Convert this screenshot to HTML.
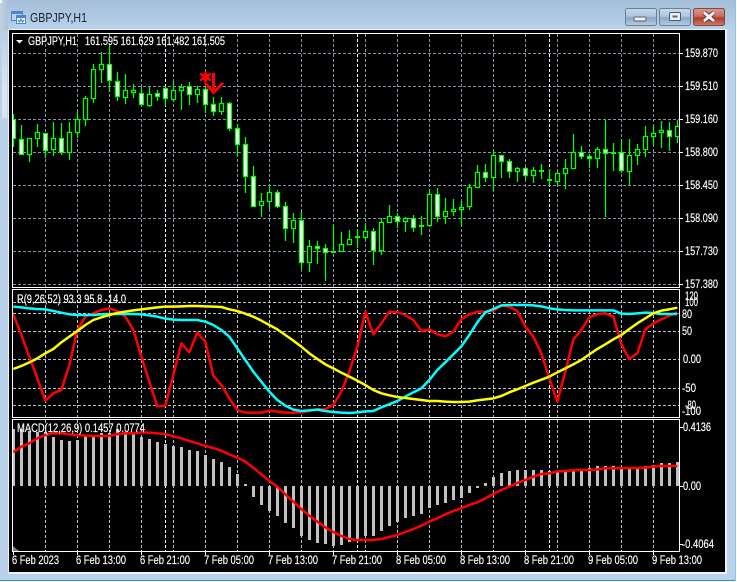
<!DOCTYPE html>
<html><head><meta charset="utf-8"><title>GBPJPY,H1</title>
<style>
html,body{margin:0;padding:0;background:#fff;width:737px;height:582px;overflow:hidden}
svg{display:block}
text{font-family:"Liberation Sans",sans-serif;font-size:11.5px;fill:#fff;stroke:#fff;stroke-width:.15px}
</style></head><body>
<svg width="737" height="582" viewBox="0 0 737 582" xmlns="http://www.w3.org/2000/svg">
<defs>
<linearGradient id="tb" x1="0" y1="0" x2="0" y2="1"><stop offset="0" stop-color="#a4bed8"/><stop offset="1" stop-color="#b8d2eb"/></linearGradient>
<linearGradient id="tl" x1="0" y1="0" x2="1" y2="0"><stop offset="0" stop-color="#c4d2e0"/><stop offset="1" stop-color="#a9c3dd"/></linearGradient>
<linearGradient id="side" x1="0" y1="0" x2="0" y2="1"><stop offset="0" stop-color="#b9cee2"/><stop offset=".7" stop-color="#dde7f0"/><stop offset="1" stop-color="#d8e3ee"/></linearGradient>
<linearGradient id="btn" x1="0" y1="0" x2="0" y2="1"><stop offset="0" stop-color="#c8d9ea"/><stop offset=".45" stop-color="#afc6dd"/><stop offset=".55" stop-color="#8aa8c6"/><stop offset="1" stop-color="#b4cde4"/></linearGradient>
<linearGradient id="cls" x1="0" y1="0" x2="0" y2="1"><stop offset="0" stop-color="#dc9a8c"/><stop offset=".45" stop-color="#cb6f60"/><stop offset=".55" stop-color="#b23b2b"/><stop offset="1" stop-color="#cf7a63"/></linearGradient>
<clipPath id="c1"><rect x="13" y="34" width="666" height="253"/></clipPath>
<clipPath id="c2"><rect x="13" y="290" width="666" height="127"/></clipPath>
<clipPath id="c3"><rect x="13" y="420" width="666" height="131"/></clipPath>
</defs>
<!-- window frame -->
<path d="M2 2Q2 0 4 0H733Q735 0 735 2V580H0V30Z" fill="#b9d1ea"/>
<rect x="0" y="0" width="735" height="30" fill="url(#tb)"/>
<rect x="0" y="0" width="8" height="30" fill="url(#tl)"/>
<rect x="0" y="0" width="2" height="3" fill="#fff"/>
<rect x="2" y="30" width="5" height="88" fill="url(#side)"/>
<rect x="0" y="580" width="736" height="1" fill="#2d9aa6"/>
<rect x="735" y="0" width="1" height="581" fill="#8fc4dc"/>
<!-- inner client edges -->
<rect x="8" y="29" width="719" height="545" fill="#eef3f8"/>
<rect x="9" y="30" width="716" height="542" fill="#000"/>
<!-- title -->
<g shape-rendering="crispEdges">
<rect x="11.5" y="11.5" width="11" height="9" fill="#b8d4f0" stroke="#4c86c8"/>
<rect x="16.5" y="15.5" width="9" height="8" fill="#eef6ff" stroke="#4c86c8"/>
<rect x="12" y="12" width="10" height="2" fill="#4c86c8"/>
<rect x="17" y="16" width="8" height="2" fill="#4c86c8"/>
</g>
<path d="M18 20l1.500 2 1.500-3 1.500 3 1.500-2" fill="none" stroke="#3a74b8" stroke-width="1"/>
<text x="30" y="22" style="font-size:13px;fill:#17202c;stroke:none" textLength="57" lengthAdjust="spacingAndGlyphs">GBPJPY,H1</text>
<!-- buttons -->
<rect x="625.500" y="8.500" width="31" height="17" rx="2" fill="url(#btn)" stroke="#6d7f96"/>
<rect x="634" y="17" width="12" height="4" rx="1" fill="#eef2f6" stroke="#4f5c6e" stroke-width="1"/>
<rect x="659.500" y="8.500" width="31" height="17" rx="2" fill="url(#btn)" stroke="#6d7f96"/>
<rect x="669.500" y="12.500" width="11" height="8" rx="1" fill="#e8eef4" stroke="#4f5c6e"/>
<rect x="672.500" y="15.500" width="5" height="2" fill="#5a6778"/>
<rect x="693.500" y="8.500" width="31" height="17" rx="2" fill="url(#cls)" stroke="#7a4a50"/>
<path d="M704 12.500L714 21M714 12.500L704 21" stroke="#4c3a40" stroke-width="4.500" fill="none"/>
<path d="M704 12.500L714 21M714 12.500L704 21" stroke="#f4f4f4" stroke-width="2.800" fill="none"/>

<!-- frames -->
<g fill="none" stroke="#fff" shape-rendering="crispEdges">
<path d="M12.500 33.500H679.500V287.500H12.500Z"/>
<path d="M12.500 289.500H679.500V417.500H12.500Z"/>
<path d="M12.500 419.500H679.500V551.500H12.500Z"/>
<path d="M680 53.500h3M680 86.500h3M680 119.500h3M680 152.500h3M680 185.500h3M680 218.500h3M680 251.500h3M680 284.500h3"/>
<path d="M680 427.500h3M680 486.500h3M680 544.500h3"/>
<path d="M13.500 552v3M77.500 552v3M141.500 552v3M205.500 552v3M269.500 552v3M333.500 552v3M397.500 552v3M461.500 552v3M525.500 552v3M589.500 552v3M653.500 552v3"/>
</g>

<!-- grid main -->
<g fill="none" shape-rendering="crispEdges" stroke-dasharray="3 2">
<g clip-path="url(#c1)" stroke="#8394a6">
<path d="M13 53.500H679M13 86.500H679M13 119.500H679M13 152.500H679M13 185.500H679M13 218.500H679M13 251.500H679M13 284.500H679"/>
<path d="M45.500 34V287M77.500 34V287M109.500 34V287M141.500 34V287M173.500 34V287M205.500 34V287M237.500 34V287M269.500 34V287M301.500 34V287M333.500 34V287M365.500 34V287M397.500 34V287M429.500 34V287M461.500 34V287M493.500 34V287M525.500 34V287M557.500 34V287M589.500 34V287M621.500 34V287M653.500 34V287"/>
<path stroke="#fff" d="M165.500 34V287M357.500 34V287M549.500 34V287"/>
</g>
<g clip-path="url(#c2)" stroke="#b8c0c8">
<path d="M13 302.500H679M13 313.500H679M13 331.500H679M13 359.500H679M13 388.500H679M13 405.500H679"/>
<path d="M45.500 290V417M77.500 290V417M109.500 290V417M141.500 290V417M173.500 290V417M205.500 290V417M237.500 290V417M269.500 290V417M301.500 290V417M333.500 290V417M365.500 290V417M397.500 290V417M429.500 290V417M461.500 290V417M493.500 290V417M525.500 290V417M557.500 290V417M589.500 290V417M621.500 290V417M653.500 290V417"/>
<path stroke="#fff" d="M165.500 290V417M357.500 290V417M549.500 290V417"/>
</g>
<g clip-path="url(#c3)" stroke="#b8c0c8">
<path d="M45.500 420V551M77.500 420V551M109.500 420V551M141.500 420V551M173.500 420V551M205.500 420V551M237.500 420V551M269.500 420V551M301.500 420V551M333.500 420V551M365.500 420V551M397.500 420V551M429.500 420V551M461.500 420V551M493.500 420V551M525.500 420V551M557.500 420V551M589.500 420V551M621.500 420V551M653.500 420V551"/>
<path stroke="#fff" d="M165.500 420V551M357.500 420V551M549.500 420V551"/>
</g>
</g>

<!-- candles -->
<g clip-path="url(#c1)" stroke="#00ff00" stroke-width="1.25">
<path fill="none" d="M13.500 114V147M21.500 125V155M29.500 138V162M37.500 124V147M45.500 133V158M53.500 122V156M61.500 123V155M69.500 122V160M77.500 111V138M85.500 96V126M93.500 64V103M101.500 52V83M109.500 45V92M117.500 72V101M125.500 74V104M133.500 84V98M141.500 87V106M149.500 86V107M157.500 90V101M165.500 86V106M173.500 81V102M181.500 84V110M189.500 82V105M197.500 86V103M205.500 87V113M213.500 97V116M221.500 97V115M229.500 102V131M237.500 124V156M245.500 137V193M253.500 166V207M261.500 193V217M269.500 185V209M277.500 190V208M285.500 202V241M293.500 213V243M301.500 212V269M309.500 240V272M317.500 241V264M325.500 244V281M333.500 225V252M341.500 232V252M349.500 230V245M357.500 229V248M365.500 223V240M373.500 228V265M381.500 218V255M389.500 205V222M397.500 213V228M405.500 217V232M413.500 215V232M421.500 216V235M429.500 189V227M437.500 188V222M445.500 198V224M453.500 199V216M461.500 201V227M469.500 184V210M477.500 165V188M485.500 164V182M493.500 150V191M501.500 155V178M509.500 159V178M517.500 167V182M525.500 167V180M533.500 167V183M541.500 164V179M549.500 169V186M557.500 171V185M565.500 159V189M573.500 134V169M581.500 146V159M589.500 154V168M597.500 147V168M605.500 119V217M613.500 143V171M621.500 139V173M629.500 139V185M637.500 144V165M645.500 126V157M653.500 125V145M661.500 121V148M669.500 122V151M677.500 120V143"/>
<path fill="#fff" d="M11.500 119.500h4v19h-4zM19.500 139.500h4v15h-4zM43.500 133.500h4v17h-4zM59.500 138.500h4v14h-4zM107.500 64.500h4v16h-4zM115.500 81.500h4v15h-4zM139.500 93.500h4v11h-4zM155.500 93.500h4v3h-4zM163.500 88.500h4v10h-4zM187.500 86.500h4v8h-4zM203.500 89.500h4v15h-4zM211.500 104.500h4v7h-4zM227.500 103.500h4v25h-4zM235.500 128.500h4v16h-4zM243.500 144.500h4v32h-4zM251.500 176.500h4v30h-4zM275.500 192.500h4v14h-4zM283.500 206.500h4v22h-4zM299.500 220.500h4v42h-4zM315.500 246.500h4v2h-4zM323.500 248.500h4v4h-4zM371.500 231.500h4v19h-4zM395.500 216.500h4v5h-4zM411.500 218.500h4v9h-4zM435.500 194.500h4v22h-4zM483.500 172.500h4v5h-4zM499.500 155.500h4v6h-4zM507.500 161.500h4v10h-4zM523.500 168.500h4v7h-4zM579.500 152.500h4v4h-4zM587.500 156.500h4v2h-4zM603.500 149.500h4v4h-4zM619.500 152.500h4v18h-4zM667.500 130.500h4v6h-4z"/>
<path fill="#000" d="M27.500 138.500h4v16h-4zM35.500 132.500h4v6h-4zM51.500 138.500h4v11h-4zM67.500 132.500h4v20h-4zM75.500 119.500h4v13h-4zM83.500 98.500h4v21h-4zM91.500 69.500h4v29h-4zM99.500 64.500h4v5h-4zM123.500 90.500h4v7h-4zM131.500 90.500h4v2h-4zM147.500 94.500h4v11h-4zM171.500 90.500h4v9h-4zM179.500 87.500h4v3h-4zM195.500 89.500h4v5h-4zM219.500 103.500h4v8h-4zM259.500 201.500h4v4h-4zM267.500 192.500h4v9h-4zM291.500 220.500h4v8h-4zM307.500 246.500h4v16h-4zM339.500 244.500h4v7h-4zM347.500 239.500h4v5h-4zM363.500 231.500h4v6h-4zM379.500 222.500h4v28h-4zM387.500 216.500h4v6h-4zM403.500 218.500h4v3h-4zM427.500 194.500h4v31h-4zM443.500 211.500h4v5h-4zM451.500 209.500h4v2h-4zM459.500 207.500h4v2h-4zM467.500 187.500h4v19h-4zM475.500 172.500h4v15h-4zM491.500 155.500h4v22h-4zM515.500 168.500h4v3h-4zM531.500 170.500h4v5h-4zM555.500 173.500h4v8h-4zM563.500 168.500h4v5h-4zM571.500 152.500h4v16h-4zM595.500 149.500h4v9h-4zM627.500 155.500h4v16h-4zM635.500 149.500h4v6h-4zM643.500 136.500h4v13h-4zM651.500 133.500h4v3h-4zM659.500 130.500h4v2h-4zM675.500 126.500h4v10h-4z"/>
<path fill="#00ff00" stroke="none" d="M331 251h5v2h-5zM355 236h5v2h-5zM419 225h5v2h-5zM539 170h5v2h-5zM547 179h5v2h-5zM611 152h5v2h-5z"/>
</g>

<!-- signal marks -->
<g fill="none" stroke="#ff0000">
<path stroke-width="3" d="M213.500 73V92"/>
<path stroke-width="3" d="M205 83L213.500 92.500L223 83"/>
<path stroke-width="2.400" d="M205.500 71.500V82.500M200 73.500L211 80.500M211 73.500L200 80.500"/>
</g>
<circle cx="205.500" cy="77" r="3.500" fill="#ff0000"/>

<!-- indicator lines 1 -->
<g clip-path="url(#c2)"><g transform="translate(0 285) scale(.33333)" fill="none" stroke-width="7.500" stroke-linejoin="round">
<polyline stroke="#ff0000" points="40,88 64,150 88,215 112,280 136,347 160,325 184,315 208,240 232,135 256,95 280,85 304,75 328,70 352,78 376,95 400,135 424,215 448,290 472,364 496,362 520,270 544,175 568,202 592,143 616,170 640,272 664,300 688,340 712,375 736,383 760,383 784,383 808,377 832,380 856,383 880,383 904,382 928,378 952,373 976,372 1000,360 1024,320 1048,260 1072,185 1096,80 1120,148 1144,115 1168,80 1192,82 1216,90 1240,105 1264,138 1288,133 1312,148 1336,154 1360,140 1384,103 1408,88 1432,80 1456,80 1480,77 1504,62 1528,65 1552,78 1576,125 1600,155 1624,205 1648,280 1672,350 1696,260 1720,163 1744,135 1768,97 1792,87 1816,85 1840,95 1864,178 1888,222 1912,205 1936,133 1960,115 1984,103 2008,92 2032,82"/>
<polyline stroke="#00ffff" points="40,65 64,67 88,70 112,72 136,73 160,78 184,83 208,88 232,90 256,90 280,90 304,88 328,87 352,87 376,87 400,87 424,88 448,91 472,95 496,101 520,104 544,105 568,105 592,105 616,110 640,120 664,135 688,155 712,190 736,225 760,260 784,290 808,320 832,345 856,362 880,374 904,378 928,376 952,374 976,378 1000,381 1024,383 1048,384 1072,382 1096,379 1120,378 1144,367 1168,358 1192,348 1216,335 1240,322 1264,310 1288,285 1312,255 1336,232 1360,208 1384,184 1408,150 1432,112 1456,82 1480,72 1504,61 1528,60 1552,60 1576,60 1600,61 1624,64 1648,70 1672,73 1696,75 1720,76 1744,76 1768,76 1792,76 1816,76 1840,76 1864,86 1888,87 1912,85 1936,83 1960,84 1984,87 2008,87 2032,87"/>
<polyline stroke="#ffff00" points="40,252 64,243 88,232 112,220 136,205 160,192 184,172 208,155 232,138 256,120 280,105 304,97 328,90 352,84 376,80 400,76 424,73 448,70 472,67 496,65 520,65 544,64 568,63 592,63 616,64 640,65 664,66 688,73 712,78 736,86 760,95 784,107 808,120 832,133 856,150 880,167 904,185 928,205 952,222 976,238 1000,250 1024,263 1048,275 1072,287 1096,300 1120,315 1144,325 1168,331 1192,336 1216,339 1240,342 1264,345 1288,348 1312,348 1336,350 1360,351 1384,351 1408,350 1432,346 1456,343 1480,340 1504,333 1528,322 1552,313 1576,303 1600,293 1624,284 1648,275 1672,262 1696,250 1720,238 1744,225 1768,208 1792,192 1816,178 1840,163 1864,150 1888,132 1912,115 1936,100 1960,85 1984,77 2008,73 2032,68"/>
</g></g>

<!-- histogram -->
<g clip-path="url(#c3)">
<path fill="none" stroke="#c0c0c0" stroke-width="3" shape-rendering="crispEdges" d="M13.500 486V429M21.500 486V429M29.500 486V431M37.500 486V432M45.500 486V432M53.500 486V437M61.500 486V440M69.500 486V441M77.500 486V440M85.500 486V435M93.500 486V435M101.500 486V433M109.500 486V433M117.500 486V429M125.500 486V432M133.500 486V434M141.500 486V437M149.500 486V439M157.500 486V442M165.500 486V444M173.500 486V446M181.500 486V447M189.500 486V450M197.500 486V451M205.500 486V455M213.500 486V459M221.500 486V462M229.500 486V467M237.500 486V474M245.500 486V484M253.500 486V497M261.500 486V505M269.500 486V511M277.500 486V516M285.500 486V523M293.500 486V528M301.500 486V536M309.500 486V540M317.500 486V543M325.500 486V544M333.500 486V546M341.500 486V545M349.500 486V542M357.500 486V539M365.500 486V536M373.500 486V536M381.500 486V531M389.500 486V526M397.500 486V522M405.500 486V518M413.500 486V516M421.500 486V514M429.500 486V508M437.500 486V505M445.500 486V503M453.500 486V500M461.500 486V498M469.500 486V493M477.500 486V488M485.500 486V483M493.500 486V477M501.500 486V473M509.500 486V471M517.500 486V470M525.500 486V470M533.500 486V470M541.500 486V470M549.500 486V471M557.500 486V471M565.500 486V471M573.500 486V470M581.500 486V470M589.500 486V468M597.500 486V466M605.500 486V466M613.500 486V466M621.500 486V467M629.500 486V467M637.500 486V468M645.500 486V466M653.500 486V465M661.500 486V463M669.500 486V463M677.500 486V462"/>
<g transform="translate(0 285) scale(.33333)" fill="none" stroke-width="7.500" stroke-linejoin="round">
<polyline stroke="#ff0000" points="40,502 64,485 88,475 112,460 136,450 160,445 184,445 208,448 232,450 256,452 280,453 304,453 328,453 352,447 376,445 400,445 424,442 448,443 472,445 496,447 520,454 544,460 568,468 592,475 616,483 640,489 664,497 688,508 712,518 736,530 760,548 784,568 808,588 832,605 856,628 880,650 904,672 928,692 952,710 976,727 1000,741 1024,753 1048,762 1072,765 1096,765 1120,765 1144,762 1168,756 1192,750 1216,741 1240,732 1264,722 1288,710 1312,700 1336,688 1360,678 1384,670 1408,660 1432,652 1456,640 1480,627 1504,615 1528,605 1552,594 1576,585 1600,575 1624,567 1648,565 1672,559 1696,558 1720,556 1744,555 1768,555 1792,553 1816,550 1840,550 1864,549 1888,549 1912,549 1936,548 1960,545 1984,543 2008,543 2032,543"/>
</g>
</g>
<path d="M13 546L19 551H13Z" fill="#708090"/>

<!-- chart labels -->
<path d="M16 40h7l-3.500 3.500z" fill="#fff"/>
<text x="28" y="45" textLength="49" lengthAdjust="spacingAndGlyphs">GBPJPY,H1</text>
<text x="85" y="45" textLength="140" lengthAdjust="spacingAndGlyphs">161.595 161.629 161.482 161.505</text>
<text x="17" y="303" textLength="109" lengthAdjust="spacingAndGlyphs">R(9,26,52) 93.3 95.8 -14.0</text>
<text x="17" y="432" textLength="128" lengthAdjust="spacingAndGlyphs">MACD(12,26,9) 0.1457 0.0774</text>

<!-- price axis -->
<g>
<text x="685" y="57" textLength="33" lengthAdjust="spacingAndGlyphs">159.870</text>
<text x="685" y="90" textLength="33" lengthAdjust="spacingAndGlyphs">159.510</text>
<text x="685" y="123" textLength="33" lengthAdjust="spacingAndGlyphs">159.160</text>
<text x="685" y="156" textLength="33" lengthAdjust="spacingAndGlyphs">158.800</text>
<text x="685" y="189" textLength="33" lengthAdjust="spacingAndGlyphs">158.450</text>
<text x="685" y="222" textLength="33" lengthAdjust="spacingAndGlyphs">158.090</text>
<text x="685" y="255" textLength="33" lengthAdjust="spacingAndGlyphs">157.730</text>
<text x="685" y="288" textLength="33" lengthAdjust="spacingAndGlyphs">157.380</text>
<text x="685" y="300" textLength="13" lengthAdjust="spacingAndGlyphs">120</text>
<text x="685" y="306" textLength="13" lengthAdjust="spacingAndGlyphs">100</text>
<text x="682" y="318" textLength="10" lengthAdjust="spacingAndGlyphs">80</text>
<text x="682" y="335" textLength="10" lengthAdjust="spacingAndGlyphs">50</text>
<text x="683" y="363" textLength="18" lengthAdjust="spacingAndGlyphs">0.00</text>
<text x="682" y="392" textLength="14" lengthAdjust="spacingAndGlyphs">-50</text>
<text x="685" y="409" textLength="11" lengthAdjust="spacingAndGlyphs">-80</text>
<text x="682" y="415" textLength="19" lengthAdjust="spacingAndGlyphs">-100</text>
<text x="683" y="431" textLength="28" lengthAdjust="spacingAndGlyphs">0.4136</text>
<text x="683" y="490" textLength="18" lengthAdjust="spacingAndGlyphs">0.00</text>
<text x="682" y="548" textLength="32" lengthAdjust="spacingAndGlyphs">-0.4064</text>
</g>

<!-- time axis -->
<g>
<text x="12" y="564" textLength="47" lengthAdjust="spacingAndGlyphs">6 Feb 2023</text>
<text x="76" y="564" textLength="50" lengthAdjust="spacingAndGlyphs">6 Feb 13:00</text>
<text x="140" y="564" textLength="50" lengthAdjust="spacingAndGlyphs">6 Feb 21:00</text>
<text x="204" y="564" textLength="50" lengthAdjust="spacingAndGlyphs">7 Feb 05:00</text>
<text x="268" y="564" textLength="50" lengthAdjust="spacingAndGlyphs">7 Feb 13:00</text>
<text x="332" y="564" textLength="50" lengthAdjust="spacingAndGlyphs">7 Feb 21:00</text>
<text x="396" y="564" textLength="50" lengthAdjust="spacingAndGlyphs">8 Feb 05:00</text>
<text x="460" y="564" textLength="50" lengthAdjust="spacingAndGlyphs">8 Feb 13:00</text>
<text x="524" y="564" textLength="50" lengthAdjust="spacingAndGlyphs">8 Feb 21:00</text>
<text x="588" y="564" textLength="50" lengthAdjust="spacingAndGlyphs">9 Feb 05:00</text>
<text x="652" y="564" textLength="50" lengthAdjust="spacingAndGlyphs">9 Feb 13:00</text>
</g>
</svg>
</body></html>
